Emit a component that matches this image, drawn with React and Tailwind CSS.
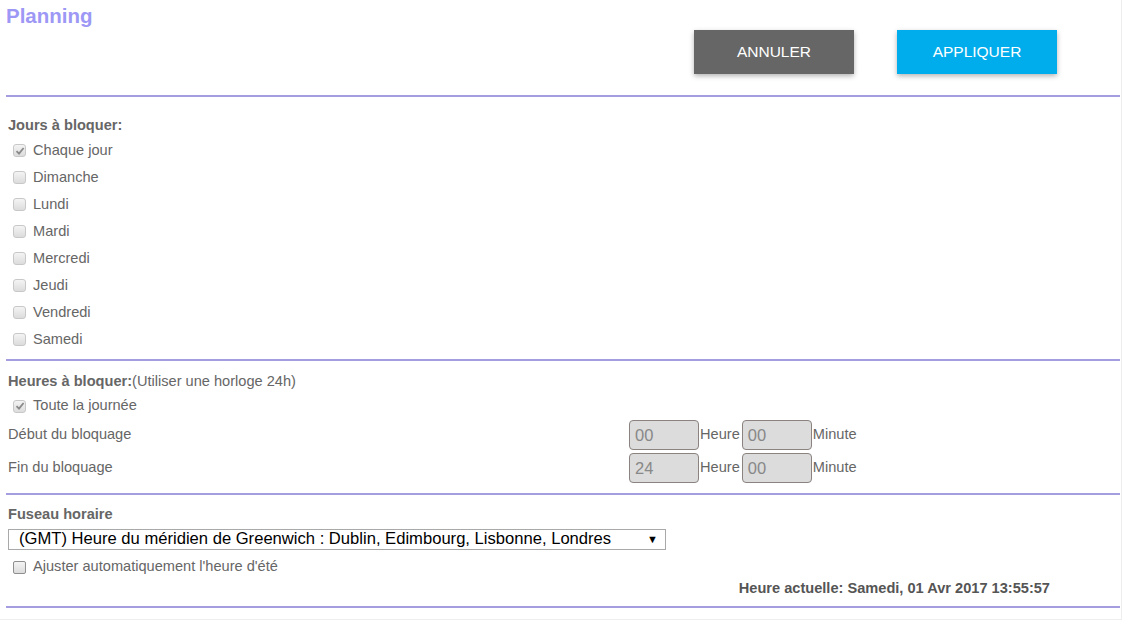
import React from 'react';

const Box = ({ checked, square }) => (
    <span
        className={`inline-flex items-center justify-center w-[13px] h-[13px] border bg-gradient-to-b from-[#f4f4f4] to-[#dcdcdc] ${square ? 'rounded-[2px] border-[#8f8f8f]' : 'rounded-[3px] border-[#c8c8c8]'}`}
    >
        {checked && (
            <svg width="10" height="10" viewBox="0 0 10 10">
                <path d="M1.5 5.2 L4 7.6 L8.6 2" fill="none" stroke="#8a8a8a" strokeWidth="1.8" />
            </svg>
        )}
    </span>
);

const CheckRow = ({ label, checked, h = 'h-[27px]', square }) => (
    <div className={`flex items-center ${h} pl-[5px] gap-[7px]`}>
        <Box checked={checked} square={square} />
        <span className="text-[14.6px] text-[#666]">{label}</span>
    </div>
);

const TimeInput = ({ value }) => (
    <div className="w-[70px] h-[30px] rounded-[4px] border border-[#8a8380] bg-[#dcdcdc] text-[16.5px] text-[#888] pl-[5px] flex items-center">
        {value}
    </div>
);

const days = ['Chaque jour', 'Dimanche', 'Lundi', 'Mardi', 'Mercredi', 'Jeudi', 'Vendredi', 'Samedi'];

export default function App() {
    return (
        <div className="w-[1122px] h-[620px] bg-white border-r border-b border-[#eeeeee] pl-[6px] pr-[1px] font-['Liberation_Sans',Arial,sans-serif] overflow-hidden">
            {/* Header */}
            <div className="h-[97px] border-b-2 border-[#a49de0] relative">
                <h1 className="absolute left-0 top-[5px] text-[20.5px] font-bold text-[#9d98f5] leading-[22px]">Planning</h1>
                <div className="flex justify-end gap-[43px] pr-[63px] pt-[30px]">
                    <button className="w-[160px] h-[44px] bg-[#666666] text-white text-[15.5px] shadow-[0_2px_5px_rgba(0,0,0,0.3)]">ANNULER</button>
                    <button className="w-[160px] h-[44px] bg-[#00adec] text-white text-[15.5px] shadow-[0_2px_5px_rgba(0,0,0,0.3)]">APPLIQUER</button>
                </div>
            </div>

            {/* Jours */}
            <div className="border-b-2 border-[#a49de0] pt-[19px] pb-[6px] pl-[2px]">
                <div className="h-[20px] flex items-center text-[14.6px] font-bold text-[#666]">Jours à bloquer:</div>
                <div className="pt-[1px]">
                    {days.map((d, i) => (
                        <CheckRow key={d} label={d} checked={i === 0} />
                    ))}
                </div>
            </div>

            {/* Heures */}
            <div className="border-b-2 border-[#a49de0] pt-[11px] pb-[10px] pl-[2px]">
                <div className="h-[20px] flex items-center text-[14.6px] text-[#666]">
                    <span className="font-bold">Heures à bloquer:</span>(Utiliser une horloge 24h)
                </div>
                <CheckRow label="Toute la journée" checked h="h-[28px]" />
                <div className="flex items-center h-[30px]">
                    <span className="w-[621px] text-[14.6px] text-[#666]">Début du bloquage</span>
                    <TimeInput value="00" />
                    <span className="text-[14.6px] text-[#666] ml-[1px] mr-[2px]">Heure</span>
                    <TimeInput value="00" />
                    <span className="text-[14.6px] text-[#666] ml-[1px]">Minute</span>
                </div>
                <div className="flex items-center h-[30px] mt-[3px]">
                    <span className="w-[621px] text-[14.6px] text-[#666]">Fin du bloquage</span>
                    <TimeInput value="24" />
                    <span className="text-[14.6px] text-[#666] ml-[1px] mr-[2px]">Heure</span>
                    <TimeInput value="00" />
                    <span className="text-[14.6px] text-[#666] ml-[1px]">Minute</span>
                </div>
            </div>

            {/* Fuseau */}
            <div className="border-b-2 border-[#a49de0] pt-[10px] pb-[7px] pl-[2px]">
                <div className="h-[20px] flex items-center text-[14.6px] font-bold text-[#666]">Fuseau horaire</div>
                <div className="mt-[4px] w-[658px] h-[21px] border border-[#a9a9a9] flex items-center justify-between pl-[10px] pr-[7px] text-[16.6px] text-black">
                    <span>(GMT) Heure du méridien de Greenwich : Dublin, Edimbourg, Lisbonne, Londres</span>
                    <span className="text-[11px]">▼</span>
                </div>
                <div className="mt-[7px]">
                    <CheckRow label="Ajuster automatiquement l'heure d'été" h="h-[20px]" square />
                </div>
                <div className="mt-[2px] h-[20px] flex items-center justify-end pr-[70px] text-[14.6px] font-bold text-[#555]">
                    Heure actuelle:&nbsp;Samedi, 01 Avr 2017 13:55:57
                </div>
            </div>
        </div>
    );
}
